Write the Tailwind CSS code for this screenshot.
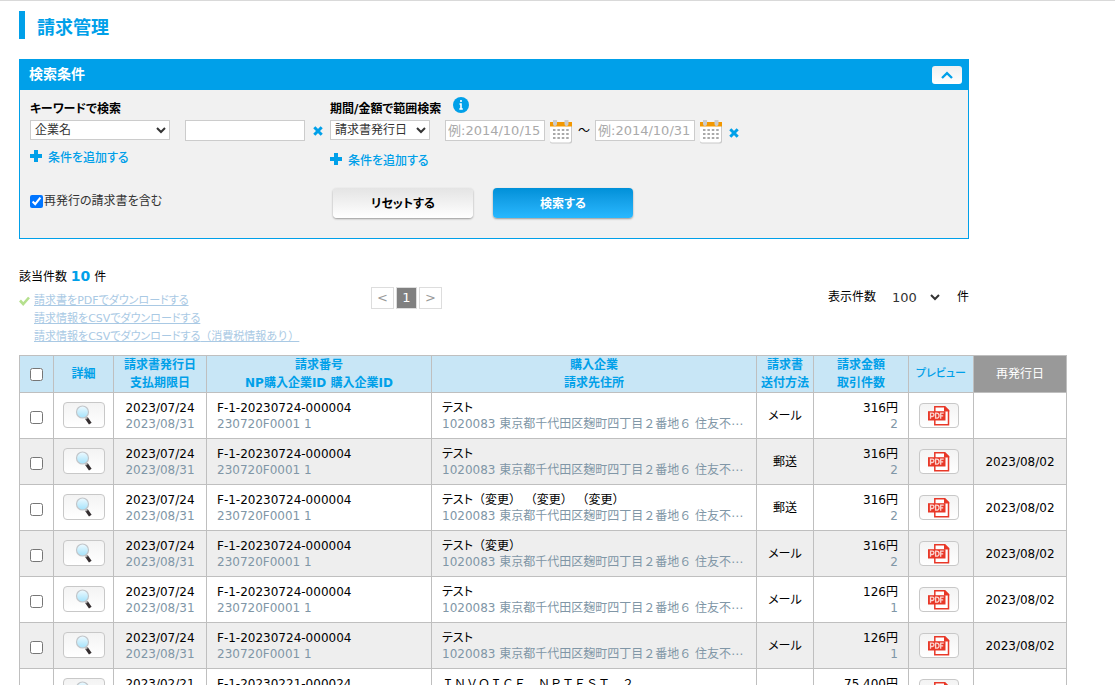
<!DOCTYPE html>
<html lang="ja">
<head>
<meta charset="utf-8">
<meta name="viewport" content="width=device-width, initial-scale=1">
<title>請求管理</title>
<script src="https://cdn.jsdelivr.net/npm/@tailwindcss/browser@4"></script>
</head>
<body class="bg-white border-t border-[#d9d9d9] overflow-x-hidden text-xs leading-[18px] text-black font-['DejaVu_Sans','Noto_Sans_CJK_JP',sans-serif] [font-feature-settings:'palt']">

<svg class="absolute size-0" aria-hidden="true">
  <defs>
    <linearGradient id="lens" x1="0" y1="0" x2="0" y2="1"><stop offset="0" stop-color="#eefaff"/><stop offset="1" stop-color="#a3e2fb"/></linearGradient>
  </defs>
  <symbol id="i-cross" viewBox="0 0 10 10"><path d="M1.3 1.3 8.7 8.7M8.7 1.3 1.3 8.7" stroke="#00a0e9" stroke-width="3"/></symbol>
  <symbol id="i-plus" viewBox="0 0 12 12"><path d="M6 0v12M0 6h12" stroke="#00a0e9" stroke-width="4"/></symbol>
  <symbol id="i-cal" viewBox="0 0 24 24">
    <path d="M1 6h22v15.5a2 2 0 0 1-2 2H3a2 2 0 0 1-2-2z" fill="#c9c9c9"/>
    <path d="M1 6h21v14.500a2 2 0 0 1-2 2H3a2 2 0 0 1-2-2z" fill="#fff"/>
    <path d="M1 2h22v4.500H1z" fill="#f39800"/>
    <path d="M4 0h4v4a2 2 0 0 1-4 0zM15.500 0h4v4a2 2 0 0 1-4 0z" fill="#ccc"/>
    <path d="M4 10h16M4 14h16M4 18h16" stroke="#a9a9a9" stroke-width="2.200" stroke-dasharray="2.500 1.900"/>
  </symbol>
  <symbol id="i-glass" viewBox="0 0 18 20">
    <path d="M11.500 13.200 15.300 18.600" stroke="#332d2f" stroke-width="3.200"/>
    <path d="M10.300 11.500 12 14" stroke="#aaa" stroke-width="1.500"/>
    <circle cx="7.500" cy="7" r="6" fill="url(#lens)" stroke="#c2c6ca" stroke-width="1.200"/>
  </symbol>
  <symbol id="i-pdf" viewBox="0 0 24 20">
    <path d="M7.800.8h9.700l4 3.900v14H7.800z" fill="#fff" stroke="#e83828" stroke-width="1.500"/>
    <path d="M17 0h1l4.300 4.200V5.500H17z" fill="#e83828"/>
    <path d="M1 5.200h17.500v9.300H1z" fill="#e83828"/>
    <path d="M3.500 12.800V7.200h1.800a1.600 1.600 0 0 1 0 3.300H3.800M8.600 7.200v5h1a2.400 2.400 0 0 0 0-5zM13.700 12.800V7.200h3M13.700 9.900h2.500" fill="none" stroke="#fbd5d0" stroke-width="1.300"/>
  </symbol>
</svg>

<main class="pl-[19px] pt-2.5">
  <h1 class="border-l-6 border-[#00a0e9] pl-3 h-7 leading-[34px] text-lg font-bold text-[#00a0e9]">請求管理</h1>

  <form class="mt-5 w-full max-w-[950px] border border-[#00a0e9] bg-[#f1f1f1]">
    <div class="flex items-center justify-between bg-[#00a0e9] h-[30px] pl-[9px] pr-1.5">
      <h2 class="pb-0.5 text-sm font-bold text-white">検索条件</h2>
      <button type="button" aria-label="検索条件を閉じる" class="flex items-center justify-center w-[30px] h-[18px] rounded-[3px] bg-linear-to-b from-[#efefef] to-white">
        <svg class="w-3 h-2" viewBox="0 0 12 8"><path d="M1 7 6 2.200 11 7" fill="none" stroke="#00a0e9" stroke-width="2.400"/></svg>
      </button>
    </div>
    <div class="flex h-[148px] pl-2.5 pt-2.5">
      <div class="w-[300px] shrink-0">
        <label for="kw-type" class="block font-bold">キーワードで検索</label>
        <div class="mt-0.5 flex items-start">
          <select id="kw-type" class="w-[140px] h-5 border border-[#ccc] bg-white text-[#333] text-xs"><option>企業名</option></select>
          <input type="text" aria-label="キーワード" class="ml-[15px] w-[120px] h-[21px] border border-[#ccc] bg-white px-1">
          <button type="button" aria-label="条件を削除" class="ml-2 mt-1.5"><svg class="size-2.5"><use href="#i-cross"/></svg></button>
        </div>
        <a href="#" class="mt-2 flex items-center gap-1.5 font-medium text-[#00a0e9]"><svg class="size-3 mb-1"><use href="#i-plus"/></svg>条件を追加する</a>
        <label class="mt-[25px] flex items-center text-[#333]"><input type="checkbox" checked class="size-[13px] mr-px">再発行の請求書を含む</label>
      </div>
      <div class="flex-1">
        <div class="flex h-[18px] items-center">
          <label for="range-type" class="font-bold">期間/金額で範囲検索</label>
          <svg class="ml-3 mb-2 size-4" viewBox="0 0 16 16"><circle cx="8" cy="8" r="8" fill="#00a0e9"/><path d="M8 3v2M6.500 7H8v5M6.300 12h3.500" stroke="#fff" stroke-width="1.600" fill="none"/></svg>
        </div>
        <div class="mt-0.5 flex items-start">
          <select id="range-type" class="w-[100px] h-5 border border-[#ccc] bg-white text-[#333] text-xs"><option>請求書発行日</option></select>
          <input type="text" aria-label="開始日" placeholder="例:2014/10/15" class="ml-[15px] w-[100px] h-[21px] border border-[#ccc] bg-white px-0.5 text-[13px] placeholder:text-[#aaa]">
          <button type="button" aria-label="開始日を選択" class="ml-1"><svg class="size-6"><use href="#i-cal"/></svg></button>
          <span class="w-[22px] mt-0.5 text-center">～</span>
          <input type="text" aria-label="終了日" placeholder="例:2014/10/31" class="w-[100px] h-[21px] border border-[#ccc] bg-white px-0.5 text-[13px] placeholder:text-[#aaa]">
          <button type="button" aria-label="終了日を選択" class="ml-1"><svg class="size-6"><use href="#i-cal"/></svg></button>
          <button type="button" aria-label="条件を削除" class="ml-1.5 mt-2"><svg class="size-2.5"><use href="#i-cross"/></svg></button>
        </div>
        <a href="#" class="mt-2 flex items-center gap-1.5 font-medium text-[#00a0e9]"><svg class="size-3 mb-1"><use href="#i-plus"/></svg>条件を追加する</a>
        <div class="mt-[18px] flex gap-5 pl-[3px]">
          <button type="reset" class="w-[140px] h-[30px] pt-0.5 rounded bg-linear-to-b from-[#e4e4e4] to-white font-bold shadow-[0_1px_2px_#999]">リセットする</button>
          <button type="submit" class="w-[140px] h-[30px] pt-0.5 rounded bg-linear-to-b from-[#0090d8] to-[#28b8ff] font-bold text-white shadow-[0_1px_2px_#999]">検索する</button>
        </div>
      </div>
    </div>
  </form>

  <section class="mt-7 flex w-full max-w-[950px] items-start">
    <div class="w-[352px] shrink-0">
      <p>該当件数 <b class="text-sm leading-[18px] text-[#00a0e9]">10</b> 件</p>
      <ul class="relative mt-1.5 pl-[15px] text-[11px] text-[#a9c9e4]">
        <li><svg class="absolute left-0 top-1 w-[11px] h-2.5" viewBox="0 0 11 10"><path d="M1 4.500 4.200 8 10 1.500" fill="none" stroke="#b5e08e" stroke-width="2.600"/></svg><a href="#" class="underline">請求書をPDFでダウンロードする</a></li>
        <li><a href="#" class="underline">請求情報をCSVでダウンロードする</a></li>
        <li><a href="#" class="underline">請求情報をCSVでダウンロードする<span class="[font-feature-settings:normal]">（消費税情報あり）</span></a></li>
      </ul>
    </div>
    <nav aria-label="ページ" class="mt-5 flex gap-0.5 text-center text-[13px] leading-5">
      <a href="#" class="w-[23px] h-[22px] border border-[#ddd] text-[#999]">&lt;</a>
      <a href="#" class="w-[21px] h-[22px] border border-[#ddd] bg-[#808080] text-white">1</a>
      <a href="#" class="w-[23px] h-[22px] border border-[#ddd] text-[#999]">&gt;</a>
    </nav>
    <div class="mt-5 ml-auto flex items-center">
      <label for="per-page">表示件数</label>
      <select id="per-page" class="ml-3 w-[55px] h-5 bg-white text-[#333] text-[13px]"><option>100</option></select>
      <span class="ml-3.5">件</span>
    </div>
  </section>

  <table class="mt-[9px] w-full max-w-[1048px] table-fixed border-collapse text-xs leading-4">
    <colgroup>
      <col class="w-[34px]"><col class="w-[60px]"><col class="w-[93px]"><col class="w-[225px]"><col class="w-[325px]"><col class="w-[57px]"><col class="w-[95px]"><col class="w-[65px]"><col class="w-[93px]">
    </colgroup>
    <thead class="bg-[#c8e6f6] text-[#00a0e9] leading-[18px]">
      <tr class="h-[37px]">
        <th class="border border-[#bfbfbf] align-middle"><input type="checkbox" aria-label="すべて選択" class="block mx-auto size-[13px]"></th>
        <th class="border border-[#bfbfbf]">詳細</th>
        <th class="border border-[#bfbfbf]">請求書発行日<br>支払期限日</th>
        <th class="border border-[#bfbfbf]">請求番号<br>NP購入企業ID 購入企業ID</th>
        <th class="border border-[#bfbfbf]">購入企業<br>請求先住所</th>
        <th class="border border-[#bfbfbf]">請求書<br>送付方法</th>
        <th class="border border-[#bfbfbf]">請求金額<br>取引件数</th>
        <th class="border border-[#bfbfbf] text-[11px] font-medium">プレビュー</th>
        <th class="border border-[#bfbfbf] bg-[#999] font-normal text-white">再発行日</th>
      </tr>
    </thead>
    <tbody id="rows"></tbody>
  </table>
</main>

<script>
const address = '1020083 東京都千代田区麹町四丁目２番地６ 住友不⋯';
const invoices = [
  ['2023/07/24', '2023/08/31', 'F-1-20230724-000004', '230720F0001 1', 'テスト', '', 'メール', '316円', '2', ''],
  ['2023/07/24', '2023/08/31', 'F-1-20230724-000004', '230720F0001 1', 'テスト', '', '郵送', '316円', '2', '2023/08/02'],
  ['2023/07/24', '2023/08/31', 'F-1-20230724-000004', '230720F0001 1', 'テスト', '（変更） （変更） （変更）', '郵送', '316円', '2', '2023/08/02'],
  ['2023/07/24', '2023/08/31', 'F-1-20230724-000004', '230720F0001 1', 'テスト', '（変更）', 'メール', '316円', '2', '2023/08/02'],
  ['2023/07/24', '2023/08/31', 'F-1-20230724-000004', '230720F0001 1', 'テスト', '', 'メール', '126円', '1', '2023/08/02'],
  ['2023/07/24', '2023/08/31', 'F-1-20230724-000004', '230720F0001 1', 'テスト', '', 'メール', '126円', '1', '2023/08/02'],
  ['2023/02/21', '', 'F-1-20230221-000024', '', '', 'ＩＮＶＯＩＣＥ　ＮＰＴＥＳＴ　２', '', '75,400円', '', ''],
];
document.getElementById('rows').innerHTML = invoices.map(([issued, due, no, ids, company, suffix, method, amount, count, reissued]) => `
  <tr class="h-[46px] even:bg-[#eee]">
    <td class="border border-[#bfbfbf]"><input type="checkbox" aria-label="${no}を選択" class="block mx-auto mt-1 size-[13px]"></td>
    <td class="border border-[#bfbfbf]"><button type="button" aria-label="詳細" class="flex items-center justify-center mx-auto mb-0.5 w-[42px] h-[26px] rounded border border-[#c8c8c8] bg-linear-to-b from-[#f3f3f3] to-white"><svg class="w-[18px] h-5"><use href="#i-glass"/></svg></button></td>
    <td class="border border-[#bfbfbf] text-center">${issued}<br><span class="text-[#8096a6]">${due}&#8203;</span></td>
    <td class="border border-[#bfbfbf] pl-2.5">${no}<br><span class="text-[#8096a6]">${ids}&#8203;</span></td>
    <td class="border border-[#bfbfbf] pl-2.5 whitespace-nowrap overflow-hidden">${company}<span class="[font-feature-settings:normal]">${suffix}<br><span class="text-[#8096a6]">${address}</span></span></td>
    <td class="border border-[#bfbfbf] text-center">${method}</td>
    <td class="border border-[#bfbfbf] pr-2.5 text-right">${amount}<br><span class="text-[#8096a6]">${count}&#8203;</span></td>
    <td class="border border-[#bfbfbf]"><button type="button" aria-label="プレビュー" class="flex items-center justify-center ml-2.5 w-10 h-[25px] rounded border border-[#c8c8c8] bg-linear-to-b from-[#f3f3f3] to-white"><svg class="w-6 h-5"><use href="#i-pdf"/></svg></button></td>
    <td class="border border-[#bfbfbf] text-center">${reissued}</td>
  </tr>`).join('');
</script>
</body>
</html>
